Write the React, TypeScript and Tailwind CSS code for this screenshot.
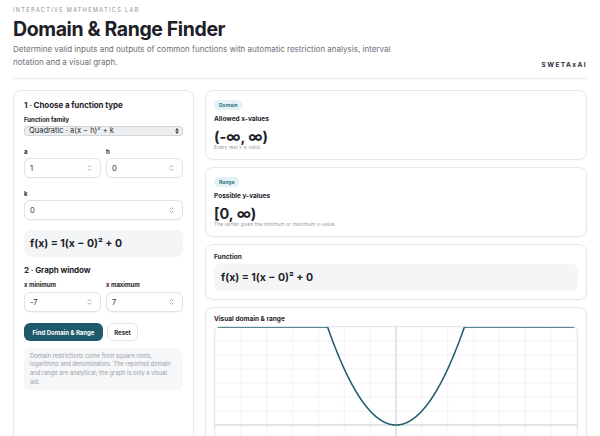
import { useMemo, useState } from 'react';

const PLOT_W = 366;
const PLOT_H = 196;

function Spinner() {
  return (
    <svg
      className="pointer-events-none absolute right-[9px] top-1/2 -translate-y-1/2"
      width="5"
      height="8"
      viewBox="0 0 5 8"
      fill="none"
      stroke="#a1a6ad"
      strokeWidth="0.9"
      strokeLinecap="round"
      strokeLinejoin="round"
    >
      <path d="M1 3 L2.5 1.5 L4 3" />
      <path d="M1 5 L2.5 6.5 L4 5" />
    </svg>
  );
}

function NumberField({
  label,
  value,
  onChange,
  labelGap = 'mt-[2.5px]',
}: {
  label: string;
  value: string;
  onChange: (v: string) => void;
  labelGap?: string;
}) {
  return (
    <label className="block">
      <span className="block text-[6px] font-bold leading-[9px] text-[#1f2328]">{label}</span>
      <div className={`relative ${labelGap}`}>
        <input
          value={value}
          onChange={(e) => onChange(e.target.value)}
          className="block h-[20px] w-full rounded-[6px] border border-[#dfe2e6] bg-white pl-[5px] text-[7.5px] text-[#2d3238] shadow-[0_1px_1px_rgba(0,0,0,0.03)] outline-none"
        />
        <Spinner />
      </div>
    </label>
  );
}

function ResultCard({
  badge,
  title,
  value,
  note,
}: {
  badge: string;
  title: string;
  value: string;
  note: string;
}) {
  return (
    <div className="rounded-[8px] border border-[#e6e8eb] bg-white px-[8px] pb-[8px] pt-[9px] shadow-[0_1px_2px_rgba(0,0,0,0.03)]">
      <div className="w-fit rounded-full bg-[#e5f2f5] px-[5px] text-[5px] font-bold leading-[10px] text-[#2f7385]">
        {badge}
      </div>
      <div className="mt-[4.5px] text-[6.5px] font-bold leading-[9px] text-[#1f2328]">{title}</div>
      <div className="mt-[6px] text-[14.5px] font-bold leading-[14px] text-[#1f2328]">{value}</div>
      <div className="mt-[0.5px] text-[5px] leading-[7px] text-[#9aa0a6]">{note}</div>
    </div>
  );
}

export default function App() {
  const [a, setA] = useState('1');
  const [h, setH] = useState('0');
  const [k, setK] = useState('0');
  const [xMin, setXMin] = useState('-7');
  const [xMax, setXMax] = useState('7');

  const formula = `f(x) = ${a}(x − ${h})² + ${k}`;

  const graph = useMemo(() => {
    const lo = Number(xMin) || -7;
    const hi = Number(xMax) || 7;
    const yLo = -7;
    const yHi = 7;
    const sx = (x: number) => ((x - lo) / (hi - lo)) * PLOT_W;
    const sy = (y: number) => ((yHi - y) / (yHi - yLo)) * PLOT_H;
    const pts: string[] = [];
    const A = Number(a) || 0;
    const Hh = Number(h) || 0;
    const K = Number(k) || 0;
    for (let i = 0; i <= 560; i++) {
      const x = lo + ((hi - lo) * i) / 560;
      const y = Math.min(yHi, Math.max(yLo, A * (x - Hh) ** 2 + K));
      pts.push(`${sx(x).toFixed(2)},${sy(y).toFixed(2)}`);
    }
    const vLines = Array.from({ length: hi - lo + 1 }).map((_, i) => sx(lo + i));
    const hLines = Array.from({ length: yHi - yLo + 1 }).map((_, i) => sy(yLo + i));
    return { pts: pts.join(' '), vLines, hLines, x0: sx(0), y0: sy(0) };
  }, [a, h, k, xMin, xMax]);

  return (
    <div
      className="h-[436px] overflow-hidden bg-white text-[#1f2328]"
      style={{ fontFamily: 'Inter, "Noto Sans", "Liberation Sans", sans-serif' }}
    >
      <div className="px-[13px]">
        {/* Header */}
        <header className="border-b border-[#e8eaed] pb-[10px] pt-[6px]">
          <div className="text-[5.5px] leading-[8px] tracking-[0.25em] text-[#8b9096]">
            INTERACTIVE MATHEMATICS LAB
          </div>
          <h1 className="mt-[1.5px] text-[19.5px] font-bold leading-[26px] tracking-[-0.02em] text-[#1d2026]">
            Domain &amp; Range Finder
          </h1>
          <div className="mt-[1.5px] flex items-end justify-between">
            <p className="w-[392px] text-[8px] leading-[12.5px] text-[#6b7078]">
              Determine valid inputs and outputs of common functions with automatic restriction analysis, interval
              notation and a visual graph.
            </p>
            <div className="mb-[-1px] text-[6.5px] font-bold leading-[8px] tracking-[0.22em] text-[#2a2d33]">
              SWETAxAI
            </div>
          </div>
        </header>

        <main className="mt-[11px] grid grid-cols-[181px_1fr] gap-[11px]">
          {/* Controls */}
          <section className="rounded-[8px] border border-[#e6e8eb] bg-white px-[10px] pt-[8px] shadow-[0_1px_2px_rgba(0,0,0,0.03)]">
            <h2 className="text-[8px] font-bold leading-[12px] tracking-[-0.01em] text-[#1f2328]">
              1 · Choose a function type
            </h2>
            <div className="mt-[3.5px] text-[6px] font-bold leading-[9px]">Function family</div>
            <div className="relative mt-[2.5px]">
              <select className="block h-[10px] w-full appearance-none rounded-[3px] border border-[#d3d5d9] bg-[#eceef0] pl-[4px] text-[7.5px] leading-[8px] text-[#2a2d33] outline-none">
                <option>Quadratic · a(x − h)² + k</option>
                <option>Square root · a√(x − h) + k</option>
                <option>Reciprocal · a/(x − h) + k</option>
                <option>Logarithm · a·ln(x − h) + k</option>
              </select>
              <svg
                className="pointer-events-none absolute right-[4px] top-1/2 -translate-y-1/2"
                width="4"
                height="7"
                viewBox="0 0 4 7"
                fill="#2a2d33"
              >
                <path d="M0.3 2.9 L2 0.6 L3.7 2.9 Z" />
                <path d="M0.3 4.1 L2 6.4 L3.7 4.1 Z" />
              </svg>
            </div>

            <div className="mt-[10.5px] grid grid-cols-2 gap-[5px]">
              <NumberField label="a" value={a} onChange={setA} />
              <NumberField label="h" value={h} onChange={setH} />
            </div>
            <div className="mt-[10.5px]">
              <NumberField label="k" value={k} onChange={setK} />
            </div>

            <div className="mt-[10px] flex h-[27px] items-center rounded-[7px] bg-[#f3f5f7] pl-[6px] text-[10.5px] font-bold text-[#1f2328]">
              {formula}
            </div>

            <h2 className="mt-[7px] text-[8px] font-bold leading-[12px] tracking-[-0.01em]">2 · Graph window</h2>
            <div className="mt-[3.5px] grid grid-cols-2 gap-[5px]">
              <NumberField label="x minimum" value={xMin} onChange={setXMin} labelGap="mt-[3.5px]" />
              <NumberField label="x maximum" value={xMax} onChange={setXMax} labelGap="mt-[3.5px]" />
            </div>

            <div className="mt-[11px] flex gap-[4px]">
              <button className="h-[18px] w-[79px] rounded-[6px] bg-[#1f5a6c] text-[6px] font-bold text-white">
                Find Domain &amp; Range
              </button>
              <button
                onClick={() => {
                  setA('1');
                  setH('0');
                  setK('0');
                  setXMin('-7');
                  setXMax('7');
                }}
                className="h-[18px] w-[31px] rounded-[6px] border border-[#e1e4e8] bg-white text-[6px] font-bold text-[#2a2d33]"
              >
                Reset
              </button>
            </div>

            <p className="mt-[7px] rounded-[6px] bg-[#f5f7f9] px-[6px] py-[3.5px] text-[5.8px] leading-[8.7px] text-[#9aa0a6]">
              Domain restrictions come from square roots, logarithms and denominators. The reported domain and range
              are analytical; the graph is only a visual aid.
            </p>
          </section>

          {/* Results */}
          <section className="flex flex-col gap-[7px]">
            <ResultCard badge="Domain" title="Allowed x-values" value="(-∞, ∞)" note="Every real x is valid." />
            <ResultCard
              badge="Range"
              title="Possible y-values"
              value="[0, ∞)"
              note="The vertex gives the minimum or maximum y-value."
            />

            <div className="rounded-[8px] border border-[#e6e8eb] bg-white px-[8px] pb-[8px] pt-[7.5px] shadow-[0_1px_2px_rgba(0,0,0,0.03)]">
              <div className="text-[6.5px] font-bold leading-[9px]">Function</div>
              <div className="mt-[2.5px] flex h-[27px] items-center rounded-[7px] bg-[#f3f5f7] pl-[7px] text-[10.5px] font-bold">
                {formula}
              </div>
            </div>

            <div className="rounded-[8px] border border-[#e6e8eb] bg-white px-[8px] pb-[9px] pt-[6.5px] shadow-[0_1px_2px_rgba(0,0,0,0.03)]">
              <div className="text-[6.5px] font-bold leading-[9px]">Visual domain &amp; range</div>
              <div className="mt-[2.5px] overflow-hidden rounded-[6px] border border-[#e3e6ea] bg-white">
                <svg width="100%" height={PLOT_H} viewBox={`0 0 ${PLOT_W} ${PLOT_H}`} preserveAspectRatio="none" className="block">
                  {graph.vLines.map((x, i) => (
                    <line key={`v${i}`} x1={x} y1={0} x2={x} y2={PLOT_H} stroke="#eef0f3" strokeWidth="0.8" />
                  ))}
                  {graph.hLines.map((y, i) => (
                    <line key={`h${i}`} x1={0} y1={y} x2={PLOT_W} y2={y} stroke="#eef0f3" strokeWidth="0.8" />
                  ))}
                  <line x1={graph.x0} y1={0} x2={graph.x0} y2={PLOT_H} stroke="#c8cdd3" strokeWidth="0.9" />
                  <line x1={0} y1={graph.y0} x2={PLOT_W} y2={graph.y0} stroke="#c8cdd3" strokeWidth="0.9" />
                  <polyline points={graph.pts} fill="none" stroke="#23606f" strokeWidth="1.6" strokeLinejoin="round" />
                </svg>
              </div>
            </div>
          </section>
        </main>
      </div>
    </div>
  );
}
